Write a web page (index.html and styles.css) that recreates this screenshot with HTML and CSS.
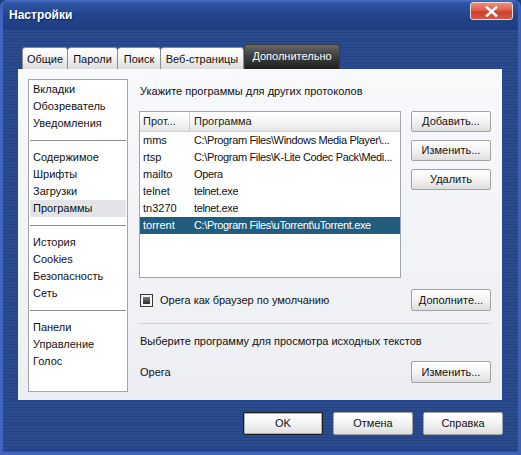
FILE: index.html
```html
<!DOCTYPE html>
<html lang="ru">
<head>
<meta charset="utf-8">
<title>Настройки</title>
<link rel="stylesheet" href="styles.css">
</head>
<body>
<div class="window">
  <div class="titlebar">
    <span class="title">Настройки</span>
    <span class="close">
      <svg width="13" height="11" viewBox="0 0 13 11"><path d="M2 1.5 L11 9.5 M11 1.5 L2 9.5" stroke="#fff" stroke-width="2.6" stroke-linecap="square"/></svg>
    </span>
  </div>
  <div class="client">
    <div class="tabs">
      <div class="tab t1">Общие</div>
      <div class="tab t2">Пароли</div>
      <div class="tab t3">Поиск</div>
      <div class="tab t4">Веб-страницы</div>
      <div class="tab active">Дополнительно</div>
    </div>
    <div class="panel">
      <div class="sidelist">
        <div class="group">
          <div class="item">Вкладки</div>
          <div class="item">Обозреватель</div>
          <div class="item">Уведомления</div>
        </div>
        <div class="sep"></div>
        <div class="group">
          <div class="item">Содержимое</div>
          <div class="item">Шрифты</div>
          <div class="item">Загрузки</div>
          <div class="item selected">Программы</div>
        </div>
        <div class="sep"></div>
        <div class="group">
          <div class="item">История</div>
          <div class="item">Cookies</div>
          <div class="item">Безопасность</div>
          <div class="item">Сеть</div>
        </div>
        <div class="sep"></div>
        <div class="group">
          <div class="item">Панели</div>
          <div class="item">Управление</div>
          <div class="item">Голос</div>
        </div>
      </div>
      <div class="main">
        <div class="label heading">Укажите программы для других протоколов</div>
        <div class="protorow">
          <div class="table">
            <div class="thead">
              <div class="c1">Прот...</div>
              <div class="c2">Программа</div>
            </div>
            <div class="tr"><div class="c1">mms</div><div class="c2">C:\Program Files\Windows Media Player\...</div></div>
            <div class="tr"><div class="c1">rtsp</div><div class="c2">C:\Program Files\K-Lite Codec Pack\Medi...</div></div>
            <div class="tr"><div class="c1">mailto</div><div class="c2">Opera</div></div>
            <div class="tr"><div class="c1">telnet</div><div class="c2">telnet.exe</div></div>
            <div class="tr"><div class="c1">tn3270</div><div class="c2">telnet.exe</div></div>
            <div class="tr sel"><div class="c1">torrent</div><div class="c2">C:\Program Files\uTorrent\uTorrent.exe</div></div>
          </div>
          <div class="btncol">
            <div class="btn">Добавить...</div>
            <div class="btn">Изменить...</div>
            <div class="btn">Удалить</div>
          </div>
        </div>
        <div class="checkrow">
          <div class="check"><span class="box"><span class="mark"></span></span><span class="label">Opera как браузер по умолчанию</span></div>
          <div class="btn">Дополните...</div>
        </div>
        <div class="hline"></div>
        <div class="label source">Выберите программу для просмотра исходных текстов</div>
        <div class="srcrow">
          <div class="label">Opera</div>
          <div class="btn">Изменить...</div>
        </div>
      </div>
    </div>
    <div class="footer">
      <div class="btn big default">OK</div>
      <div class="btn big">Отмена</div>
      <div class="btn big">Справка</div>
    </div>
  </div>
</div>
</body>
</html>
```
FILE: styles.css
```css
* { box-sizing: border-box; }
html, body { margin: 0; padding: 0; background: #1f3b80; }
body {
  font-family: "Liberation Sans", Arial, sans-serif;
  font-size: 11px;
  color: #111;
}
.window {
  width: 521px;
  height: 455px;
  display: flex;
  flex-direction: column;
  border-radius: 7px 7px 0 0;
  overflow: hidden;
  background: repeating-linear-gradient(to bottom, #2a4b8f 0, #2a4b8f 2px, #24437f 2px, #24437f 3px);
  border-left: 3px solid #4165bd;
  border-right: 3px solid #3d60b6;
  border-bottom: 3px solid #4165bd;
}
.titlebar {
  height: 30px;
  flex: none;
  display: flex;
  align-items: flex-start;
  background: linear-gradient(to bottom, #4a70c4 0, #2f55a6 3px, #24468f 45%, #1d3b7e 100%);
  margin: 0 -3px;
  padding: 0 8px 0 9px;
}
.title {
  color: #fff;
  font-weight: bold;
  font-size: 12px;
  line-height: 30px;
  text-shadow: 1px 1px 0 #0f2358;
}
.close {
  margin-left: auto;
  margin-top: 2px;
  width: 43px;
  height: 18px;
  border: 1px solid #f0d8d4;
  border-radius: 3px;
  background: linear-gradient(to bottom, #f08c7c 0, #df5e4a 45%, #c9412c 55%, #d65842 100%);
  display: flex;
  align-items: center;
  justify-content: center;
}
.close svg { display: block; }
.client {
  flex: 1;
  padding: 14px 0 0 15px;
  display: flex;
  flex-direction: column;
}
.tabs {
  height: 25px;
  display: flex;
  align-items: flex-end;
  padding-left: 4px;
}
.tab {
  height: 22px;
  line-height: 22px;
  text-align: center;
  background: linear-gradient(to bottom, #ffffff 0, #f2f2f2 50%, #dcdcdc 100%);
  border: 1px solid #8a8a8a;
  border-bottom: none;
  border-left: none;
  border-radius: 3px 3px 0 0;
  color: #111;
}
.tab.t1 { width: 46px; border-left: 1px solid #8a8a8a; }
.tab.t2 { width: 50px; }
.tab.t3 { width: 43px; }
.tab.t4 { width: 83px; }
.tab.active {
  width: 96px;
  height: 25px;
  line-height: 22px;
  color: #fff;
  border: 1px solid #3a3a3a;
  border-bottom: none;
  border-radius: 4px 4px 0 0;
  background: linear-gradient(to bottom, #6a6a6a 0, #474747 35%, #1e1e1e 100%);
}
.panel {
  width: 484px;
  height: 331px;
  flex: none;
  display: flex;
  padding: 10px 11px 8px 10px;
  gap: 11px;
  background: linear-gradient(to bottom, #f8f9fb 0, #eceef3 100%);
}
.sidelist {
  width: 100px;
  height: 313px;
  flex: none;
  background: #fff;
  border: 1px solid #a4a4a4;
  padding-top: 1px;
}
.item {
  height: 17px;
  line-height: 17px;
  padding-left: 3px;
  margin: 0 1px;
  white-space: nowrap;
}
.item.selected { background: #e2e4e8; }
.sep {
  height: 1px;
  background: #8c8c8c;
  margin: 8px 1px;
}
.main {
  flex: 1;
  display: flex;
  flex-direction: column;
}
.label { white-space: nowrap; line-height: 14px; }
.heading { padding: 5px 0 0 1px; }
.protorow {
  display: flex;
  gap: 10px;
  margin-top: 13px;
}
.table {
  width: 262px;
  height: 167px;
  background: #fff;
  border: 1px solid #a0a6b0;
  overflow: hidden;
}
.thead {
  display: flex;
  height: 20px;
  line-height: 19px;
  background: linear-gradient(to bottom, #ffffff 0, #f4f4f4 60%, #e4e4e4 100%);
  border-bottom: 1px solid #d2d2d2;
  color: #222;
}
.thead .c1 { border-right: 1px solid #cfcfcf; }
.tr {
  display: flex;
  height: 17px;
  line-height: 17px;
}
.c1 { width: 50px; padding-left: 3px; flex: none; white-space: nowrap; }
.c2 { padding-left: 4px; white-space: nowrap; overflow: hidden; letter-spacing: -0.35px; }
.thead .c2 { letter-spacing: 0; }
.tr.sel { background: #235d7e; color: #fff; }
.btncol {
  display: flex;
  flex-direction: column;
  gap: 8px;
}
.btn {
  width: 80px;
  height: 21px;
  line-height: 19px;
  text-align: center;
  border: 1px solid #a2a2a2;
  border-radius: 2px;
  background: linear-gradient(to bottom, #ffffff 0, #f3f3f3 50%, #dedede 100%);
  white-space: nowrap;
  color: #111;
}
.checkrow {
  display: flex;
  align-items: center;
  margin-top: 11px;
}
.check {
  display: flex;
  align-items: center;
  gap: 7px;
  padding-left: 1px;
}
.box {
  width: 13px;
  height: 13px;
  border: 1px solid #3a3a3a;
  background: #f4f4f4;
  display: flex;
  align-items: center;
  justify-content: center;
}
.mark {
  width: 7px;
  height: 7px;
  background: linear-gradient(to bottom, #7a7a7a, #2c2c2c);
}
.checkrow .btn { margin-left: auto; height: 22px; line-height: 20px; }
.hline {
  height: 1px;
  background: #cfd2d8;
  margin-top: 12px;
}
.source { margin-top: 10px; padding-left: 1px; }
.srcrow {
  display: flex;
  align-items: center;
  margin-top: 13px;
}
.srcrow .label { padding-left: 1px; }
.srcrow .btn { margin-left: auto; height: 22px; line-height: 20px; }
.footer {
  display: flex;
  justify-content: flex-end;
  gap: 10px;
  margin-top: 12px;
  padding-right: 15px;
}
.btn.big { width: 80px; height: 23px; line-height: 21px; }
.btn.default { border: 1px solid #1a1a1a; box-shadow: inset 0 0 0 1px #b0b0b0; }
```
